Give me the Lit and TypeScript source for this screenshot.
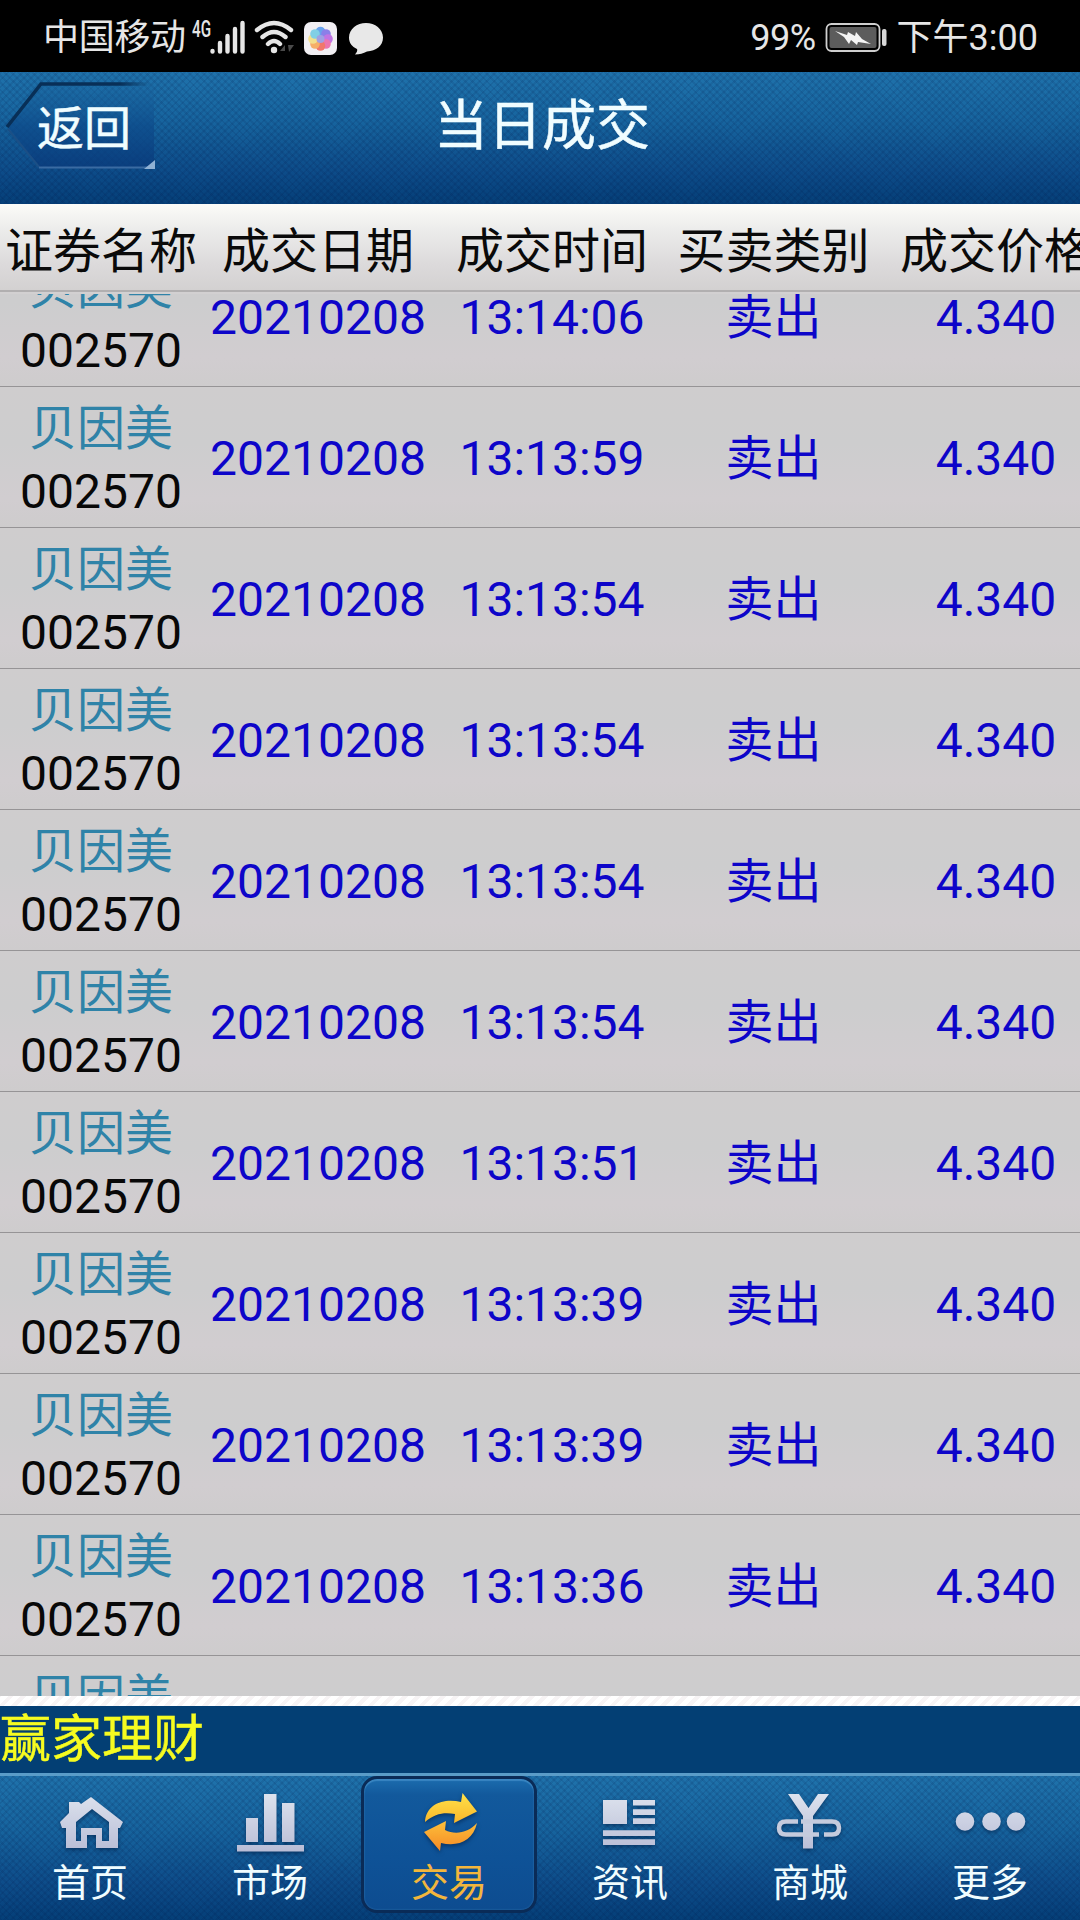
import { LitElement, html, css, svg } from "lit";
import { customElement } from "lit/decorators.js";
import { classMap } from "lit/directives/class-map.js";

const TIMES = [
  "13:14:06", "13:13:59", "13:13:54", "13:13:54", "13:13:54", "13:13:54",
  "13:13:51", "13:13:39", "13:13:39", "13:13:36", "13:13:36",
];
const COLUMNS = ["证券名称", "成交日期", "成交时间", "买卖类别", "成交价格"];

const ICONS = {
  home: svg`<path d="M10 37 L19 28 L19 17 L29 17 L31 19 L41 12 L73 37 L70 43 L68 43 L68 63 L46 63 L46 50 L37 50 L37 63 L16 63 L16 43 L12 43 Z M26 37 L26 56 L31 56 L31 43 L52 43 L52 56 L59 56 L59 37 L42 24 Z" fill-rule="evenodd"/>`,
  bars: svg`<path d="M16 33H28V57H16Z M34 9H46.5V57H34Z M52 18H64.500V57H52Z M7 60H74V66.500H7Z"/>`,
  trade: svg`<path fill="url(#g-up)" d="M16 37 C17 18 36 13 52 17 L53.500 8 L68 26.500 L45 38 L46 29 C36 27 26 28 16 37 Z"/><path fill="url(#g-down)" d="M68 38 C64 56 49 62 32 58 L31 66 L15 47 L37 36 L36 45 C46 50 59 48 68 38 Z"/>`,
  news: svg`<path d="M13 15H37V39H13Z M43 15H65V20.600H43Z M43 24.300H65V30H43Z M43 33.300H65V39H43Z M13 45.300H65V51H13Z M13 54.300H65V60H13Z"/>`,
  mall: svg`<path d="M18 9H29L38.500 23L48 9H59L43 31V63.500H33V31Z"/><path d="M28 36.500H16Q9 36.500 9 43Q9 49.500 16 49.500H49 M31 36.500H62Q69 36.500 69 43Q69 49.500 62 49.500H54" fill="none" stroke="#c5cbdd" stroke-width="4.500"/>`,
  more: svg`<circle cx="15" cy="36.500" r="9.300"/><circle cx="41.500" cy="36.500" r="9.300"/><circle cx="66" cy="36.500" r="9.300"/>`,
};
const TABS: { label: string; icon: keyof typeof ICONS }[] = [
  { label: "首页", icon: "home" },
  { label: "市场", icon: "bars" },
  { label: "交易", icon: "trade" },
  { label: "资讯", icon: "news" },
  { label: "商城", icon: "mall" },
  { label: "更多", icon: "more" },
];

@customElement("app-root")
export class AppRoot extends LitElement {
  static styles = css`
    :host {
      display: block;
      width: 1080px;
      height: 1920px;
      overflow: hidden;
      font-family: Roboto, "Noto Sans CJK SC", sans-serif;
    }
    * { box-sizing: border-box; }
    .screen { display: flex; flex-direction: column; height: 1920px; background: #cfcdcf; }
    .status {
      flex: none; height: 72px; background: #000; color: #e6e6e6;
      display: flex; align-items: center; justify-content: space-between;
      padding: 4px 42px 0 43px; font-size: 36px; line-height: 60px;
    }
    .group { display: flex; align-items: center; }
    .signals { display: block; margin-left: 4px; }
    .battery { display: block; margin: 0 9px 0 9px; }
    .carrier { letter-spacing: -0.3px; }
    .percent { letter-spacing: -0.5px; }
    .weave {
      background-image:
        repeating-linear-gradient(45deg, rgba(0,20,70,.1) 0 2px, transparent 2px 5px),
        repeating-linear-gradient(-45deg, rgba(0,20,70,.1) 0 2px, transparent 2px 5px),
        linear-gradient(#1f72ab 0, #17659f 35%, #0d4c89 75%, #053f78 100%);
    }
    .bar { flex: none; height: 132px; display: grid; grid-template-columns: 160px 1fr 160px; color: #f0fdff; -webkit-text-stroke: 0.5px #f0fdff; }
    .back { display: grid; width: 160px; height: 100px; }
    .back-shape, .back-text { grid-area: 1 / 1; }
    .back-text { font-size: 47px; line-height: 56px; padding: 29px 0 0 37px; }
    .title { font-size: 54px; line-height: 60px; padding-top: 25px; text-align: center; padding-left: 4px; }
    .grid-row { display: grid; grid-template-columns: 202px 232px 236px 207px 238px; font-size: 48px; white-space: nowrap; }
    .head {
      flex: none; height: 88px; padding-top: 6px; color: #0a0a0a; overflow: hidden;
      background: linear-gradient(#fbfbf8, #ececeb 30%, #dcdadb 70%, #d3d1d1);
      border-bottom: 2px solid #b1afb0;
    }
    .cell { text-align: center; line-height: 64px; }
    .head .cell { line-height: 84px; }
    .side { padding-top: 4px; }
    .num { padding-top: 4px; }
    .list { flex: none; height: 1404px; overflow: hidden; border-top: 2px solid #d2d0d1; }
    .rows { margin-top: -48px; }
    .deal {
      height: 141px; align-items: center; color: #0d05c9; border-bottom: 1px solid #969496;
      background: linear-gradient(#cfcdce, #cdcdce 40%, #d1cdd0 80%, #cecccd);
    }
    .stock { display: flex; flex-direction: column; height: 140px; padding-top: 10px; }
    .name { color: #2f83a8; line-height: 63px; }
    .code { color: #080808; line-height: 64px; }
    .stripe { flex: none; height: 10px; background: repeating-linear-gradient(-45deg, #fff 0 5px, #f7f4f5 5px 9px); }
    .ticker { flex: none; height: 67px; background: #033f74; color: #f6fb20; font-size: 51px; line-height: 67px; -webkit-text-stroke: 0.4px #f6fb20; }
    .tabs { flex: none; height: 147px; display: grid; grid-template-columns: repeat(6, 180px); border-top: 3px solid #5a9cc8; }
    .tab { display: flex; flex-direction: column; align-items: center; color: #f0fdff; font-size: 38px; line-height: 46px; height: 137px; padding-top: 9px; }
    .active {
      width: 176px; margin-left: 1px; color: #f3b63c; border-radius: 16px; padding-top: 6px;
      border: 3px solid #0a2b57; background: linear-gradient(#1c6cae, #12599c 12%, #0e5297 60%, #0d4c90);
      box-shadow: inset 0 2px 1px #3a86c2, inset 0 0 2px #3477b0;
    }
    .icon { display: block; fill: url(#g-silver); filter: drop-shadow(0 2px 2px rgba(0,30,70,.6)); }
    .label { margin-top: 3px; }
  `;

  private statusBar() {
    return html`<div class="status">
      <div class="group">
        <span class="carrier">中国移动</span>
        <svg class="signals" width="200" height="44" viewBox="190 14 200 44">
          <text x="192" y="35" font-size="23" font-weight="500" fill="#e6e6e6" textLength="19" lengthAdjust="spacingAndGlyphs">4G</text>
          <g stroke="#e6e6e6" stroke-width="4.400" stroke-linecap="round" fill="none">
            <path d="M212.500 49V49.500M220 41V49.500M227.500 34V49.500M235 27V49.500M242.500 21V49.500"/>
            <path d="M257 28Q274 14 291 28M262.500 35Q274 25 285.500 35M268 42Q274 36 280 42"/>
          </g>
          <circle cx="274" cy="48" r="3.200" fill="#e6e6e6"/>
          <path d="M280 49l5-6v6zM288 43h6l-5 7z" fill="#4a4a4a"/>
          <rect x="304" y="20" width="33" height="33" rx="7" fill="#f1eff3"/>
          <g opacity=".82">
            <circle cx="320.500" cy="29.500" r="4.800" fill="#4b92ec"/><circle cx="326" cy="32" r="4.800" fill="#7467e6"/>
            <circle cx="328" cy="37" r="4.800" fill="#b65ae0"/><circle cx="326" cy="42" r="4.800" fill="#ec5ba0"/>
            <circle cx="320.500" cy="44" r="4.800" fill="#f25d4e"/><circle cx="315" cy="42" r="4.800" fill="#f8a04a"/>
            <circle cx="313" cy="37" r="4.800" fill="#f4dc78"/><circle cx="315" cy="32" r="4.800" fill="#69c8e2"/>
            <circle cx="320.500" cy="37" r="4" fill="#8f8fe0"/>
          </g>
          <path d="M366 21C375 21 383 27 383 35.500C383 44 376 49 367 49.500C363 51.500 360 52.500 355 52.500Q358 49 357 47C352 44.500 349 41 349 35.500C349 27 357 21 366 21Z" fill="#e8e8e8"/>
        </svg>
      </div>
      <div class="group">
        <span class="percent">99%</span>
        <svg class="battery" width="63" height="32" viewBox="0 0 63 32">
          <rect x="1.500" y="2" width="53" height="27" rx="5" fill="none" stroke="#cfcfcf" stroke-width="1.800"/>
          <rect x="4.500" y="5" width="47" height="21" rx="2" fill="#5c5c5c"/>
          <path d="M10 9L22 13L23 10L30 14L31 10L37 17L46 22L33 20L32 23L26 18L24 22L19 15Z" fill="#f4f4f4"/>
          <rect x="57" y="7" width="4.500" height="17" rx="2" fill="#d8d8d8"/>
        </svg>
        <span>下午3:00</span>
      </div>
    </div>`;
  }

  private header() {
    return html`<div class="bar weave">
      <div class="back">
        <svg class="back-shape" width="160" height="100" viewBox="0 0 160 100">
          <defs>
            <linearGradient id="g-back" x2="0" y2="1"><stop offset="0" stop-color="#1a659f" stop-opacity=".3"/><stop offset=".5" stop-color="#0d4b8b"/><stop offset="1" stop-color="#093a7b"/></linearGradient>
            <linearGradient id="g-edge" gradientUnits="userSpaceOnUse" x1="120" x2="150" y1="0" y2="0"><stop offset="0" stop-color="#082f57"/><stop offset="1" stop-color="#082f57" stop-opacity="0"/></linearGradient>
          </defs>
          <path d="M41 12H154V95H39L8 55Z" fill="url(#g-back)" opacity=".75"/>
          <path d="M7 55L41 12H150" fill="none" stroke="url(#g-edge)" stroke-width="3.600"/>
          <path d="M8 57L39 95" fill="none" stroke="#1b4f86" stroke-width="2"/>
          <path d="M39 95.500H150" fill="none" stroke="#3a6ba2" stroke-width="2"/>
          <path d="M155 88V97H144Z" fill="#8fb1d4"/>
        </svg>
        <span class="back-text">返回</span>
      </div>
      <div class="title">当日成交</div>
    </div>`;
  }

  private deal(time: string) {
    return html`<div class="deal grid-row">
      <div class="stock cell"><span class="name">贝因美</span><span class="code">002570</span></div>
      <div class="cell num">20210208</div>
      <div class="cell num">${time}</div>
      <div class="cell side">卖出</div>
      <div class="cell num">4.340</div>
    </div>`;
  }

  private tab(t: (typeof TABS)[number]) {
    return html`<div class=${classMap({ tab: true, active: t.icon === "trade" })}>
      <svg class="icon" width="80" height="72" viewBox="0 0 80 72">
        <defs>
          <linearGradient id="g-silver" gradientUnits="userSpaceOnUse" x1="0" y1="8" x2="0" y2="66"><stop offset="0" stop-color="#dde3ee"/><stop offset="1" stop-color="#b9bdd6"/></linearGradient>
          <linearGradient id="g-up" x2="0" y2="1"><stop offset="0" stop-color="#ffe24a"/><stop offset="1" stop-color="#f9b62a"/></linearGradient>
          <linearGradient id="g-down" x2="0" y2="1"><stop offset="0" stop-color="#fdc03a"/><stop offset="1" stop-color="#f58a26"/></linearGradient>
        </defs>
        ${ICONS[t.icon]}
      </svg>
      <span class="label">${t.label}</span>
    </div>`;
  }

  render() {
    return html`<div class="screen">
      ${this.statusBar()}
      ${this.header()}
      <div class="head grid-row">${COLUMNS.map((c) => html`<div class="cell">${c}</div>`)}</div>
      <div class="list"><div class="rows">${TIMES.map((t) => this.deal(t))}</div></div>
      <div class="stripe"></div>
      <div class="ticker">赢家理财</div>
      <div class="tabs weave">${TABS.map((t) => this.tab(t))}</div>
    </div>`;
  }
}
